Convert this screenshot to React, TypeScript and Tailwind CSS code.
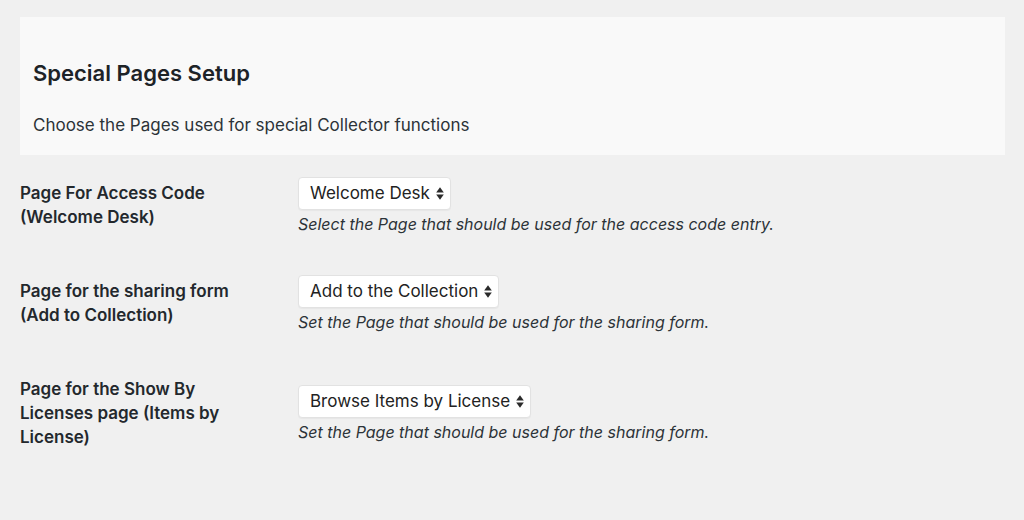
import React from "react";

const rows = [
  {
    label: "Page For Access Code (Welcome Desk)",
    value: "Welcome Desk",
    desc: "Select the Page that should be used for the access code entry.",
  },
  {
    label: "Page for the sharing form (Add to Collection)",
    value: "Add to the Collection",
    desc: "Set the Page that should be used for the sharing form.",
  },
  {
    label: "Page for the Show By Licenses page (Items by License)",
    value: "Browse Items by License",
    desc: "Set the Page that should be used for the sharing form.",
  },
];

const SelectArrows: React.FC = () => (
  <svg width="8" height="13" viewBox="0 0 8 13" className="ml-[6px] shrink-0">
    <path d="M4 0.3 L7.8 5.4 L0.2 5.4 Z" fill="#2a2a2a" />
    <path d="M4 12.7 L7.8 7.6 L0.2 7.6 Z" fill="#2a2a2a" />
  </svg>
);

const App: React.FC = () => {
  return (
    <div className="min-h-[520px] w-full bg-[#f0f0f0] pt-[17px] pl-[20px] pr-[19px] font-['Inter',sans-serif] text-[#23282d]">
      {/* header panel */}
      <div className="bg-[#f9f9f9] pl-[13px] pt-[43px] pb-[18px]">
        <h2 className="text-[22px] leading-[26px] font-semibold text-[#1d2327]">Special Pages Setup</h2>
        <p className="mt-[27px] text-[17px] leading-[24px] text-[#2c3338]">
          Choose the Pages used for special Collector functions
        </p>
      </div>

      {/* form rows */}
      <div className="flex flex-col pt-[1px]">
        {rows.map((row, i) => (
          <div key={i} className="flex items-center">
            <div className="w-[278px] shrink-0 py-[25px] pr-[40px] text-[17px] leading-[24px] font-semibold">
              {row.label}
            </div>
            <div className="flex flex-col items-start pt-[2px]">
              <div className="flex h-[33px] items-center rounded-[4px] border border-[#e2e2e2] bg-white pl-[11px] pr-[6px] text-[17px] text-[#222] shadow-[0_1px_1px_rgba(0,0,0,0.04)]">
                <span>{row.value}</span>
                <SelectArrows />
              </div>
              <p className="mt-[3px] text-[16px] leading-[22px] italic text-[#2c3338]">{row.desc}</p>
            </div>
          </div>
        ))}
      </div>
    </div>
  );
};

export default App;
